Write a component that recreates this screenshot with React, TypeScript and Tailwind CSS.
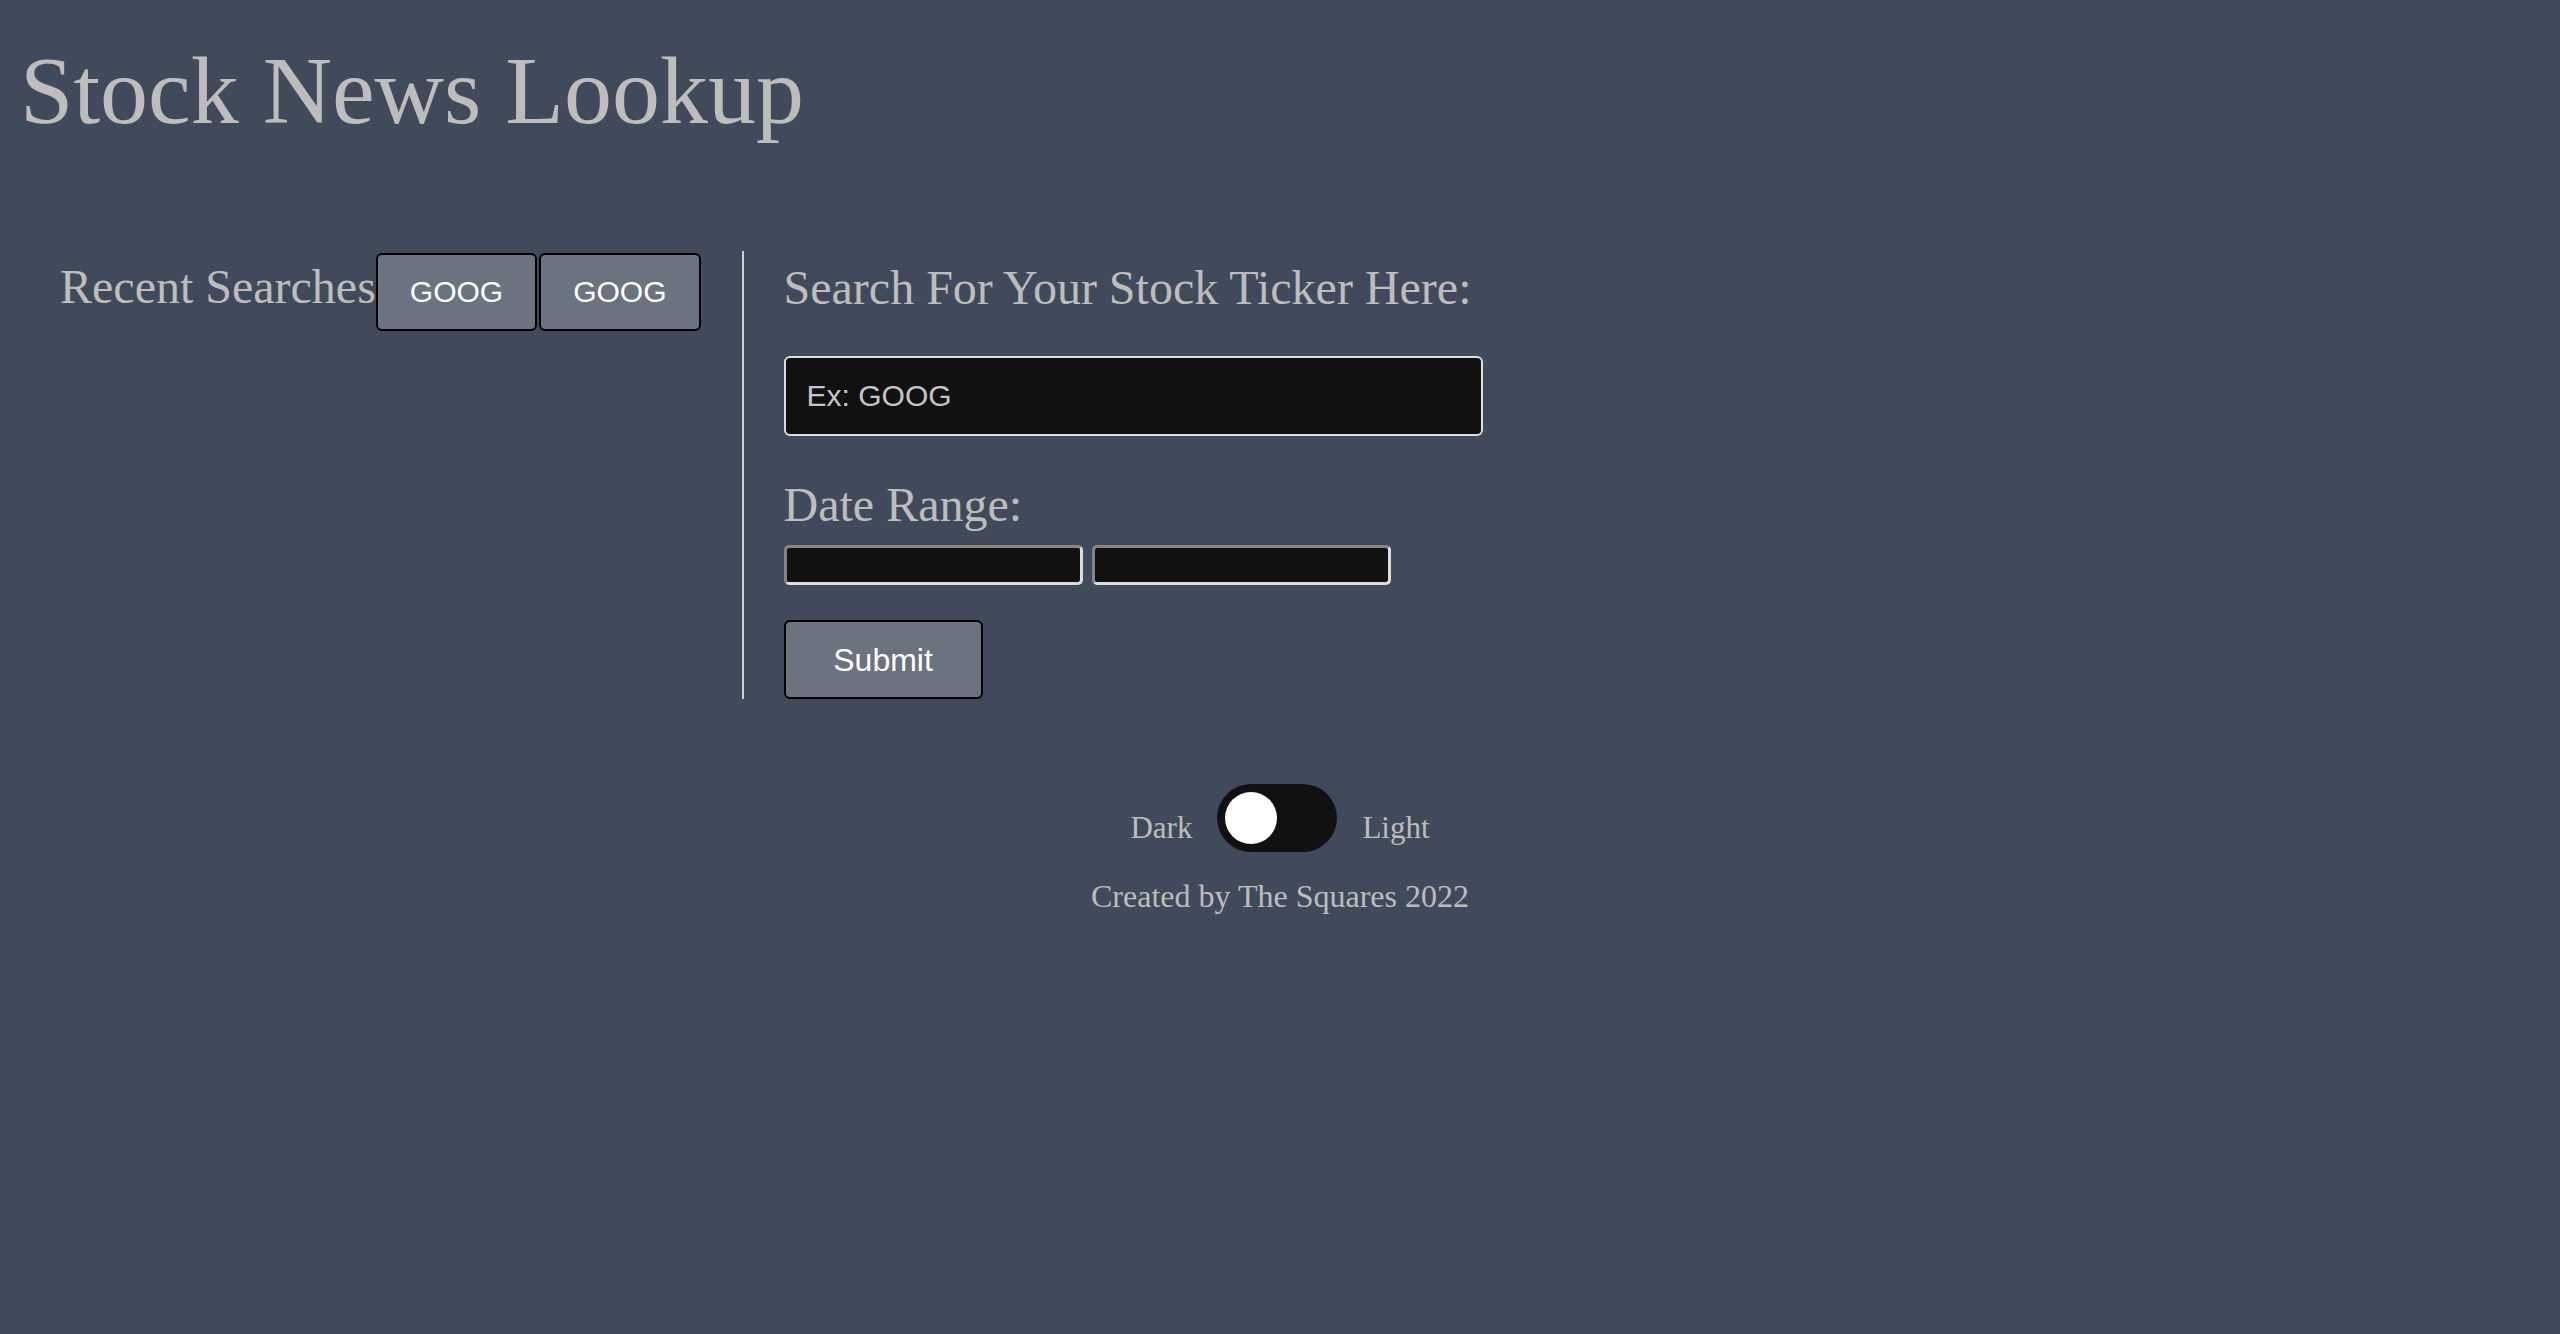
const recent = ["GOOG", "GOOG"];

const App = () => {
  return (
    <div className="min-h-screen bg-[#414a5b] font-['Liberation_Serif',serif] text-[#bdbdbd]">
      <h1 className="pl-[20px] pt-[36px] text-[96px] font-normal leading-[110px]">
        Stock News Lookup
      </h1>

      <main className="mt-[105px] flex pl-[60px]">
        <section className="flex items-baseline self-start pt-[2px] pr-[41px]">
          <h2 className="relative top-[1px] text-[48px] leading-[55px]">Recent Searches</h2>
          <div className="flex gap-[2px]">
            {recent.map((ticker, i) => (
              <button
                key={i}
                className="rounded-[6px] border-2 border-black bg-[#6b7280] px-[32px] py-[20px] font-['Liberation_Sans',sans-serif] text-[30px] leading-[34px] text-white"
              >
                {ticker}
              </button>
            ))}
          </div>
        </section>

        <section className="flex flex-col items-start border-l-2 border-[#cfcfcf] pl-[40px]">
          <h2 className="mt-[9px] text-[48px] leading-[55px]">Search For Your Stock Ticker Here:</h2>
          <input
            type="text"
            placeholder="Ex: GOOG"
            className="mt-[41px] h-[80px] w-[699px] rounded-[6px] border-2 border-[#dedede] bg-[#111111] pl-[21px] font-['Liberation_Sans',sans-serif] text-[30px] text-white outline-none placeholder:text-[#c4c4cc]"
          />
          <h2 className="mt-[41px] text-[48px] leading-[55px]">Date Range:</h2>
          <div className="mt-[13px] flex gap-[9px]">
            <input
              type="text"
              className="h-[40px] w-[299px] rounded-[5px] border-[3px] border-t-[#858585] border-l-[#858585] border-r-[#dcdcdc] border-b-[#dcdcdc] bg-[#111111] outline-none"
            />
            <input
              type="text"
              className="h-[40px] w-[299px] rounded-[5px] border-[3px] border-t-[#858585] border-l-[#858585] border-r-[#dcdcdc] border-b-[#dcdcdc] bg-[#111111] outline-none"
            />
          </div>
          <button className="mt-[35px] h-[79px] w-[199px] rounded-[6px] border-2 border-black bg-[#6b7280] font-['Liberation_Sans',sans-serif] text-[32px] leading-[36px] text-white">
            Submit
          </button>
        </section>
      </main>

      <footer className="mt-[85px] flex flex-col items-center">
        <div className="flex items-end gap-[25px]">
          <span className="pb-[6px] text-[31px] leading-[36px]">Dark</span>
          <div className="flex h-[68px] w-[120px] items-center rounded-full bg-[#111111] px-[8px]">
            <div className="h-[52px] w-[52px] rounded-full bg-white" />
          </div>
          <span className="pb-[6px] text-[31px] leading-[36px]">Light</span>
        </div>
        <p className="mt-[26px] text-[32px] leading-[37px]">Created by The Squares 2022</p>
      </footer>
    </div>
  );
};

export default App;
